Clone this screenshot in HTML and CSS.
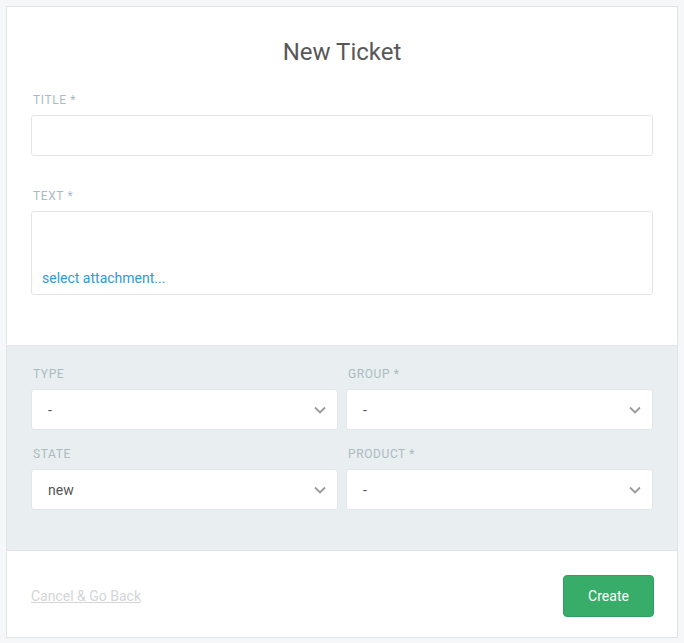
FILE: index.html
```html
<!DOCTYPE html>
<html>
<head>
<meta charset="utf-8">
<link rel="stylesheet" href="styles.css">
</head>
<body>
<div class="card">
  <section class="main">
    <h1 class="title">New Ticket</h1>
    <div class="field">
      <label class="label">Title *</label>
      <div class="input"></div>
    </div>
    <div class="field field-text">
      <label class="label">Text *</label>
      <div class="textarea"><a class="attach">select attachment...</a></div>
    </div>
  </section>
  <section class="attrs">
    <div class="grid">
      <div class="field">
        <label class="label">Type</label>
        <div class="select"><span>-</span><svg class="chev" viewBox="0 0 12 8" width="12" height="8"><path d="M1 1.5 L6 6.5 L11 1.5" fill="none" stroke="#9a9a9a" stroke-width="1.8"/></svg></div>
      </div>
      <div class="field">
        <label class="label">Group *</label>
        <div class="select"><span>-</span><svg class="chev" viewBox="0 0 12 8" width="12" height="8"><path d="M1 1.5 L6 6.5 L11 1.5" fill="none" stroke="#9a9a9a" stroke-width="1.8"/></svg></div>
      </div>
      <div class="field">
        <label class="label">State</label>
        <div class="select"><span>new</span><svg class="chev" viewBox="0 0 12 8" width="12" height="8"><path d="M1 1.5 L6 6.5 L11 1.5" fill="none" stroke="#9a9a9a" stroke-width="1.8"/></svg></div>
      </div>
      <div class="field">
        <label class="label">Product *</label>
        <div class="select"><span>-</span><svg class="chev" viewBox="0 0 12 8" width="12" height="8"><path d="M1 1.5 L6 6.5 L11 1.5" fill="none" stroke="#9a9a9a" stroke-width="1.8"/></svg></div>
      </div>
    </div>
  </section>
  <footer class="footer">
    <a class="cancel">Cancel &amp; Go Back</a>
    <button class="create">Create</button>
  </footer>
</div>
</body>
</html>
```
FILE: styles.css
```css
* { box-sizing: border-box; }
html, body { margin: 0; padding: 0; }
body {
  background: #f6f7f9;
  font-family: Roboto, "Liberation Sans", sans-serif;
  font-size: 14px;
  color: #585858;
  padding: 6px 6px 0 6px;
}
.card {
  width: 672px;
  height: 632px;
  background: #fff;
  border: 1px solid #e1e3e5;
  display: flex;
  flex-direction: column;
}
.main {
  padding: 24px 24px 50px 24px;
  border-bottom: 1px solid #e3e6e8;
}
.title {
  margin: 0 0 19px 0;
  font-size: 24px;
  font-weight: 400;
  line-height: 42px;
  text-align: center;
  color: #585858;
}
.field {
  display: flex;
  flex-direction: column;
}
.field-text { margin-top: 32px; }
.label {
  display: block;
  font-size: 12px;
  line-height: 16px;
  text-transform: uppercase;
  letter-spacing: 0.6px;
  color: #abbbbf;
  padding-left: 2px;
  margin-bottom: 7px;
}
.input {
  height: 41px;
  border: 1px solid #e2e4e6;
  border-radius: 3px;
  background: #fff;
}
.textarea {
  height: 84px;
  border: 1px solid #e2e4e6;
  border-radius: 3px;
  background: #fff;
  display: flex;
  align-items: flex-end;
  padding: 0 10px 7px 10px;
}
.attach {
  color: #2a9cd6;
  font-size: 14px;
  line-height: 18px;
  cursor: pointer;
}
.attrs {
  background: #e9eef0;
  padding: 20px 24px 40px 24px;
  border-bottom: 1px solid #e1e4e6;
}
.grid {
  display: grid;
  grid-template-columns: 1fr 1fr;
  column-gap: 8px;
  row-gap: 16px;
}
.select {
  height: 41px;
  background: #fff;
  border: 1px solid #e3e6e8;
  border-radius: 3px;
  display: flex;
  align-items: center;
  justify-content: space-between;
  padding: 0 11px 0 16px;
  color: #555;
  font-size: 14px;
}
.chev { display: block; }
.footer {
  flex: 1;
  display: flex;
  align-items: center;
  justify-content: space-between;
  padding: 3px 23px 0 24px;
}
.cancel {
  color: #d3d5d7;
  text-decoration: underline;
  font-size: 14px;
  cursor: pointer;
}
.create {
  width: 91px;
  height: 42px;
  background: #38ad69;
  border: 1px solid #31a05f;
  border-radius: 4px;
  color: #fff;
  font-family: Roboto, "Liberation Sans", sans-serif;
  font-size: 14px;
  padding: 0;
}
```
